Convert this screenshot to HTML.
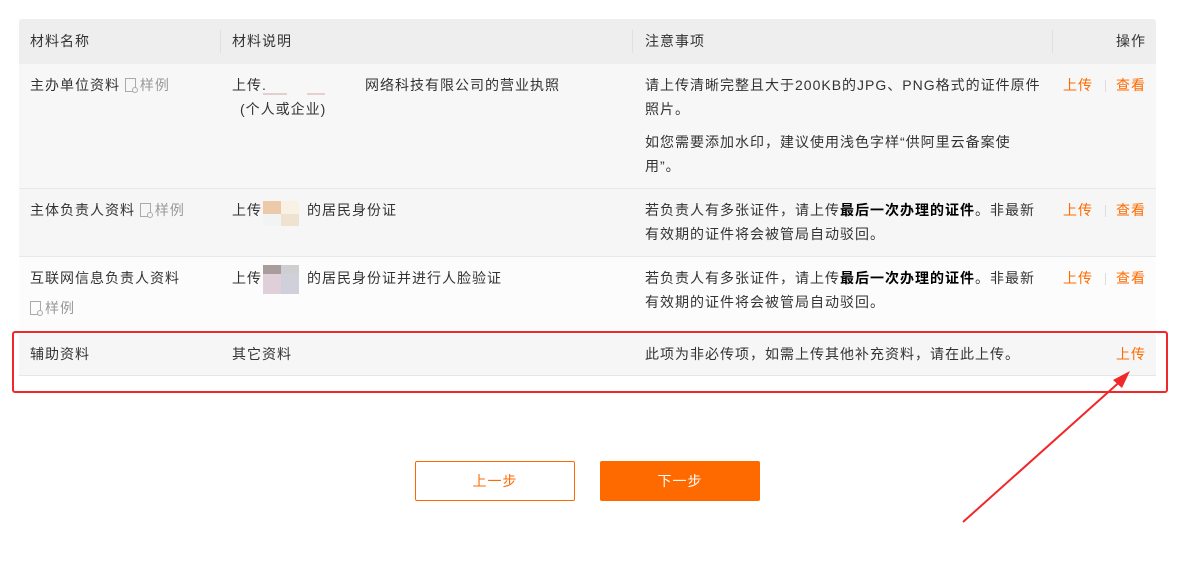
<!DOCTYPE html>
<html><head><meta charset="utf-8"><style>
body{margin:0;width:1180px;height:571px;background:#fff;position:relative;overflow:hidden;font-family:"Liberation Sans","Noto Sans CJK SC",sans-serif;font-size:14px;color:#333}
.a{position:absolute;white-space:nowrap;line-height:24px;letter-spacing:1px}
.bg{position:absolute;left:19px;width:1137px}
.o{color:#ff6a00}
.g{color:#999}
b{color:#000}
.ic{display:inline-block;width:9px;height:12px;border:1px solid #aaa;margin-right:4px;vertical-align:-2px;position:relative}
.ic:after{content:"";position:absolute;right:-3px;bottom:-2px;width:4px;height:4px;border:1px solid #aaa;border-radius:50%;background:#f7f7f7}
.sep{position:absolute;width:1px;height:12px;background:#ddd}
</style></head><body>
<div class="bg" style="top:19px;height:45px;background:#eeeeee;border-radius:3px 3px 0 0"></div>
<div class="bg" style="top:64px;height:124px;background:#f7f7f7;border-bottom:1px solid #e8e8e8"></div>
<div class="bg" style="top:189px;height:67px;background:#f6f6f6;border-bottom:1px solid #e8e8e8"></div>
<div class="bg" style="top:257px;height:73px;background:#fcfcfc"></div>
<div class="bg" style="top:334px;height:41px;background:#f6f6f6;border-bottom:1px solid #e6e6e6"></div>
<div style="position:absolute;left:220px;top:30px;width:1px;height:23px;background:#e0e0e0"></div>
<div style="position:absolute;left:632px;top:30px;width:1px;height:23px;background:#e0e0e0"></div>
<div style="position:absolute;left:1052px;top:30px;width:1px;height:23px;background:#e0e0e0"></div>

<div class="a" style="left:30px;top:29px">材料名称</div>
<div class="a" style="left:232px;top:29px">材料说明</div>
<div class="a" style="left:645px;top:29px">注意事项</div>
<div class="a" style="left:1116px;top:29px">操作</div>

<div class="a" style="left:30px;top:73px">主办单位资料 <span class="g"><span class="ic"></span>样例</span></div>
<div class="a" style="left:232px;top:73px">上传.</div>
<div style="position:absolute;left:263px;top:93px;width:24px;height:2px;background:#e0d0d0"></div>
<div style="position:absolute;left:307px;top:93px;width:18px;height:2px;background:#e8d0d0"></div>
<div class="a" style="left:365px;top:73px">网络科技有限公司的营业执照</div>
<div class="a" style="left:240px;top:97px">(个人或企业)</div>
<div class="a" style="left:645px;top:73px">请上传清晰完整且大于200KB的JPG、PNG格式的证件原件</div>
<div class="a" style="left:645px;top:97px">照片。</div>
<div class="a" style="left:645px;top:130px">如您需要添加水印，建议使用浅色字样“供阿里云备案使</div>
<div class="a" style="left:645px;top:154px">用”。</div>
<div class="a o" style="left:1063px;top:73px">上传</div><div class="sep" style="left:1105px;top:80px"></div><div class="a o" style="left:1116px;top:73px">查看</div>

<div class="a" style="left:30px;top:198px">主体负责人资料 <span class="g"><span class="ic"></span>样例</span></div>
<div class="a" style="left:232px;top:198px">上传</div>
<div style="position:absolute;left:263px;top:201px;width:18px;height:13px;background:#ecc9a8"></div>
<div style="position:absolute;left:281px;top:201px;width:18px;height:13px;background:#f9f1e4"></div>
<div style="position:absolute;left:263px;top:214px;width:18px;height:12px;background:#f2f4f4"></div>
<div style="position:absolute;left:281px;top:214px;width:18px;height:12px;background:#f0e2d0"></div>
<div class="a" style="left:307px;top:198px">的居民身份证</div>
<div class="a" style="left:645px;top:198px">若负责人有多张证件，请上传<b>最后一次办理的证件</b>。非最新</div>
<div class="a" style="left:645px;top:222px">有效期的证件将会被管局自动驳回。</div>
<div class="a o" style="left:1063px;top:198px">上传</div><div class="sep" style="left:1105px;top:205px"></div><div class="a o" style="left:1116px;top:198px">查看</div>

<div class="a" style="left:30px;top:266px">互联网信息负责人资料</div>
<div class="a g" style="left:30px;top:296px"><span class="ic"></span>样例</div>
<div class="a" style="left:232px;top:266px">上传</div>
<div style="position:absolute;left:263px;top:265px;width:18px;height:9px;background:#a89c9c"></div>
<div style="position:absolute;left:281px;top:265px;width:18px;height:9px;background:#cfcfd2"></div>
<div style="position:absolute;left:263px;top:274px;width:18px;height:20px;background:#decfd8"></div>
<div style="position:absolute;left:281px;top:274px;width:18px;height:20px;background:#d0d0da"></div>
<div class="a" style="left:307px;top:266px">的居民身份证并进行人脸验证</div>
<div class="a" style="left:645px;top:266px">若负责人有多张证件，请上传<b>最后一次办理的证件</b>。非最新</div>
<div class="a" style="left:645px;top:290px">有效期的证件将会被管局自动驳回。</div>
<div class="a o" style="left:1063px;top:266px">上传</div><div class="sep" style="left:1105px;top:273px"></div><div class="a o" style="left:1116px;top:266px">查看</div>

<div class="a" style="left:30px;top:342px">辅助资料</div>
<div class="a" style="left:232px;top:342px">其它资料</div>
<div class="a" style="left:645px;top:342px">此项为非必传项，如需上传其他补充资料，请在此上传。</div>
<div class="a o" style="left:1116px;top:342px">上传</div>

<div style="position:absolute;left:12px;top:331px;width:1152px;height:58px;border:2px solid #f0282a;border-radius:3px"></div>

<div style="position:absolute;left:415px;top:461px;width:158px;height:38px;border:1px solid #ff6a00;border-radius:2px;color:#ff6a00;text-align:center;line-height:38px;letter-spacing:1px">上一步</div>
<div style="position:absolute;left:600px;top:461px;width:160px;height:40px;background:#ff6a00;border-radius:2px;color:#fff;text-align:center;line-height:40px;letter-spacing:1px">下一步</div>

<svg style="position:absolute;left:0;top:0" width="1180" height="571">
<line x1="963" y1="522" x2="1124" y2="378" stroke="#f0282a" stroke-width="2"/>
<polygon points="1130,371 1113,380 1122,388" fill="#f0282a"/>
</svg>
</body></html>
